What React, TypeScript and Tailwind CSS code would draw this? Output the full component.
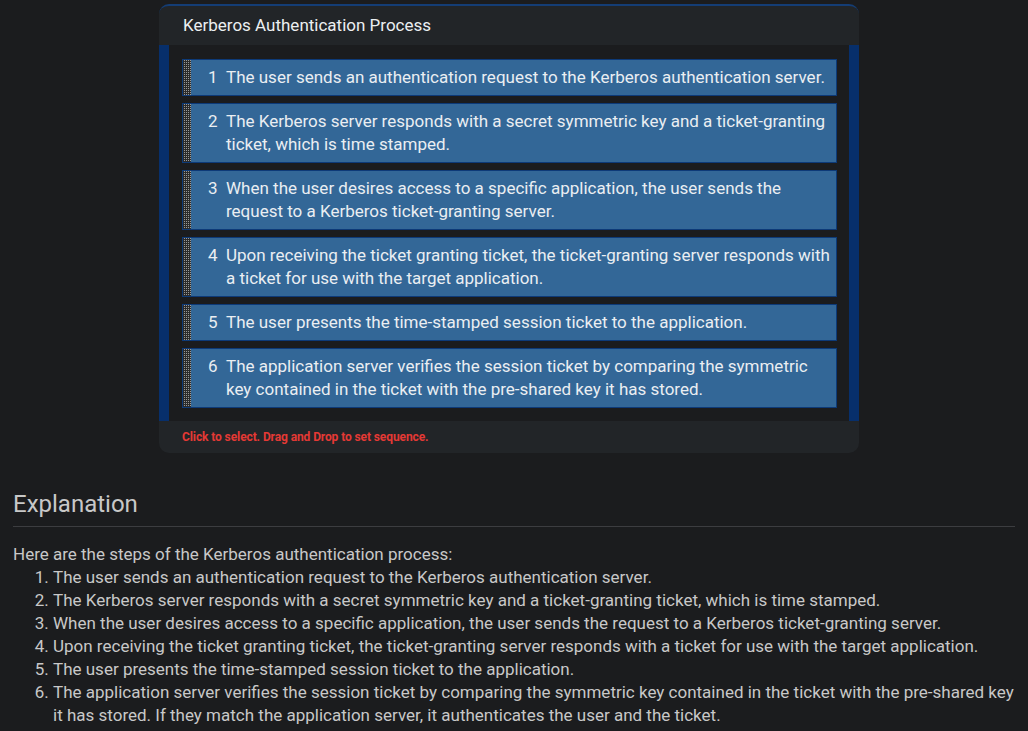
const steps = [
  'The user sends an authentication request to the Kerberos authentication server.',
  'The Kerberos server responds with a secret symmetric key and a ticket-granting ticket, which is time stamped.',
  'When the user desires access to a specific application, the user sends the request to a Kerberos ticket-granting server.',
  'Upon receiving the ticket granting ticket, the ticket-granting server responds with a ticket for use with the target application.',
  'The user presents the time-stamped session ticket to the application.',
  'The application server verifies the session ticket by comparing the symmetric key contained in the ticket with the pre-shared key it has stored.',
];

const explained = [
  ...steps.slice(0, 5),
  'The application server verifies the session ticket by comparing the symmetric key contained in the ticket with the pre-shared key it has stored. If they match the application server, it authenticates the user and the ticket.',
];

function Grip() {
  return (
    <div className="w-[8px] self-stretch bg-[#555] bg-[linear-gradient(90deg,#2b2b2b_1px,transparent_1px),linear-gradient(0deg,#2b2b2b_1px,#9a9a9a_1px)] bg-[length:2px_2px]" />
  );
}

function StepItem({ n, text }: { n: number; text: string }) {
  return (
    <div className="flex bg-[#336797] border border-[#0d3a78] cursor-move">
      <Grip />
      <div className="flex flex-1 py-[6px] pl-[17px] pr-[6px] text-[17px] leading-[23px] text-[#eaeef2]">
        <span className="w-[18px] shrink-0">{n}</span>
        <span>{text}</span>
      </div>
    </div>
  );
}

export default function App() {
  return (
    <div className="min-h-[731px] bg-[#1b1c1e] font-['Roboto',sans-serif] pt-[4px]">
      <div className="ml-[159px] w-[700px] rounded-[10px] overflow-hidden border-t-2 border-[#143d75] bg-[#222528]">
        <div className="h-[39px] flex items-center pl-[24px] text-[17px] text-[#eceff1]">
          Kerberos Authentication Process
        </div>
        <div className="flex">
          <div className="w-[10px] bg-[#072f6b]" />
          <div className="flex-1 bg-[#1b1c1e] pt-[14px] pb-[13px] pl-[13px] pr-[12px] flex flex-col gap-[7px]">
            {steps.map((s, i) => (
              <StepItem key={i} n={i + 1} text={s} />
            ))}
          </div>
          <div className="w-[10px] bg-[#072f6b]" />
        </div>
        <div className="h-[32px] flex items-center pl-[23px] text-[12px] font-bold tracking-[-0.1px] text-[#e53935]">
          Click to select. Drag and Drop to set sequence.
        </div>
      </div>

      <div className="px-[13px] pt-[37px] text-[#c8c8c8]">
        <h2 className="text-[24px] leading-[28px] pb-[8px] border-b border-[#3c3d40]">Explanation</h2>
        <div className="pt-[16px] text-[17px] leading-[23px]">
          <p>Here are the steps of the Kerberos authentication process:</p>
          <ol className="list-decimal pl-[40px]">
            {explained.map((s, i) => (
              <li key={i}>{s}</li>
            ))}
          </ol>
        </div>
      </div>
    </div>
  );
}
